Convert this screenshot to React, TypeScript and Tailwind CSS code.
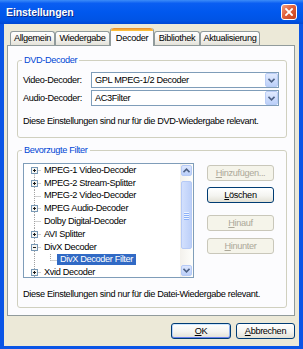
import React from "react";

type Kind = "plus" | "minus" | "leaf";

const treeItems: { label: string; kind: Kind; level: number; selected?: boolean }[] = [
  { label: "MPEG-1 Video-Decoder", kind: "plus", level: 0 },
  { label: "MPEG-2 Stream-Splitter", kind: "plus", level: 0 },
  { label: "MPEG-2 Video-Decoder", kind: "leaf", level: 0 },
  { label: "MPEG Audio-Decoder", kind: "plus", level: 0 },
  { label: "Dolby Digital-Decoder", kind: "leaf", level: 0 },
  { label: "AVI Splitter", kind: "plus", level: 0 },
  { label: "DivX Decoder", kind: "minus", level: 0 },
  { label: "DivX Decoder Filter", kind: "leaf", level: 1, selected: true },
  { label: "Xvid Decoder", kind: "plus", level: 0 },
];

const tabs = [
  { label: "Allgemein", w: "w-[45px]" },
  { label: "Wiedergabe", w: "w-[55px]" },
  { label: "Decoder", w: "w-[44px]", active: true },
  { label: "Bibliothek", w: "w-[46px]" },
  { label: "Aktualisierung", w: "w-[60px]" },
];

function Chevron({ up = false }: { up?: boolean }) {
  return (
    <svg width="7" height="5" viewBox="0 0 7 5">
      <polyline
        points={up ? "0.5,4.2 3.5,1.2 6.5,4.2" : "0.5,0.8 3.5,3.8 6.5,0.8"}
        fill="none"
        stroke="#4D6185"
        strokeWidth="1.6"
      />
    </svg>
  );
}

function Combo({ value }: { value: string }) {
  return (
    <div className="flex h-[16px] flex-1 border border-[#7F9DB9] bg-white">
      <span className="flex flex-1 items-center pl-[3px]">{value}</span>
      <div className="flex w-[13px] items-center justify-center rounded-[2px] border border-[#BACDF6] bg-[linear-gradient(to_bottom,#E1EAFE,#BCD0F9)]">
        <Chevron />
      </div>
    </div>
  );
}

function Button({
  children,
  disabled,
  isDefault,
  className = "",
}: {
  children: React.ReactNode;
  disabled?: boolean;
  isDefault?: boolean;
  className?: string;
}) {
  const look = disabled
    ? "border-[#C9C7BA] bg-[#F5F4EA] text-[#ACA899]"
    : "border-[#003C74] bg-[linear-gradient(to_bottom,#FFFFFF,#F4F4F0_55%,#E2E0D5)]";
  const ring = isDefault
    ? "shadow-[inset_0_1px_0_#CEE7FF,inset_0_-1px_0_#6982EE,inset_1px_0_0_#B9D1FA,inset_-1px_0_0_#8DAEEB]"
    : "";
  return (
    <div className={`flex h-[16px] items-center justify-center rounded-[3px] border leading-[11px] ${look} ${ring} ${className}`}>
      {children}
    </div>
  );
}

function Connector({ kind, level, first }: { kind: Kind; level: number; first: boolean }) {
  const dot = { stroke: "#A0A0A0", strokeDasharray: "1 1" };
  if (level === 1) {
    return (
      <svg width="33" height="12.8" viewBox="0 0 33 12.8" className="h-[12.8px] w-[33px] shrink-0">
        <line x1="10.5" y1="0" x2="10.5" y2="12.8" {...dot} />
        <line x1="26.5" y1="0" x2="26.5" y2="6.5" {...dot} />
        <line x1="26.5" y1="6.5" x2="33" y2="6.5" {...dot} />
      </svg>
    );
  }
  return (
    <svg width="17" height="12.8" viewBox="0 0 17 12.8" className="h-[12.8px] w-[17px] shrink-0">
      <line x1="10.5" y1={first ? 6.5 : 0} x2="10.5" y2="12.8" {...dot} />
      <line x1="10.5" y1="6.5" x2="17" y2="6.5" {...dot} />
      {kind !== "leaf" && (
        <>
          <rect x="7.5" y="3.5" width="6" height="6" fill="#F6F6F2" stroke="#7898B5" />
          <line x1="9" y1="6.5" x2="12" y2="6.5" stroke="#1A1A1A" />
          {kind === "plus" && <line x1="10.5" y1="5" x2="10.5" y2="8" stroke="#1A1A1A" />}
        </>
      )}
    </svg>
  );
}

function ScrollButton({ up }: { up?: boolean }) {
  return (
    <div className="h-[13px] p-[1px]">
      <div className="flex h-full items-center justify-center rounded-[2px] border border-[#B6CAF6] bg-[linear-gradient(to_bottom,#DDE7FE,#BBCFF9)]">
        <Chevron up={up} />
      </div>
    </div>
  );
}

export default function App() {
  return (
    <div className="flex h-[349px] w-[303px] flex-col bg-[#0A55E6] font-['Liberation_Sans',Arial,sans-serif] text-[9.2px] leading-[11px] tracking-[-0.35px] text-black">
      {/* Title bar */}
      <div className="flex h-[24px] shrink-0 items-center justify-between bg-[linear-gradient(to_bottom,#3C8CF8_0%,#0A5EF2_14%,#0058EE_50%,#0053E4_86%,#0047D4_100%)] pl-[6px] pr-[6px]">
        <span className="text-[10.5px] font-bold tracking-[-0.1px] text-white [text-shadow:1px_1px_0_#0A2A8C]">
          Einstellungen
        </span>
        <div className="flex h-[16px] w-[16px] items-center justify-center rounded-[3px] border border-white bg-[linear-gradient(135deg,#F2A184,#E1603A_45%,#C4411D)]">
          <svg width="8" height="8" viewBox="0 0 8 8">
            <path d="M1 1 L7 7 M7 1 L1 7" stroke="white" strokeWidth="1.8" strokeLinecap="square" />
          </svg>
        </div>
      </div>

      {/* Body */}
      <div className="mx-[4px] mb-[3px] flex flex-1 flex-col bg-[#ECE9D8] pl-[3px] pr-[4px] pt-[4px]">
        {/* Tabs */}
        <div className="relative z-10 -mb-[1px] flex h-[18px] items-end pl-[3px]">
          {tabs.map((t) =>
            t.active ? (
              <div
                key={t.label}
                className={`flex h-[18px] flex-col rounded-t-[3px] border-x border-[#919B9C] bg-[#FCFCFE] ${t.w}`}
              >
                <div className="h-[3px] rounded-t-[3px] bg-[linear-gradient(to_bottom,#E68B2C,#FFC73C)]" />
                <div className="flex flex-1 items-center justify-center pb-[1px]">{t.label}</div>
              </div>
            ) : (
              <div
                key={t.label}
                className={`mb-[1px] flex h-[14px] items-center justify-center rounded-t-[3px] border border-b-0 border-[#919B9C] bg-[linear-gradient(to_bottom,#FFFFFF,#F4F3EF_55%,#E4E2D9)] ${t.w}`}
              >
                {t.label}
              </div>
            )
          )}
        </div>

        {/* Tab page */}
        <div className="flex h-[271px] flex-col border border-[#919B9C] bg-[#FCFCFE] pl-[9px] pr-[7px] pt-[9px]">
          <fieldset className="rounded-[3px] border border-[#D0D0BF] pb-[10px] pl-[5px] pr-[7px] pt-[6px]">
            <legend className="-ml-[1px] px-[2px] text-[#0046D5]">DVD-Decoder</legend>
            <div className="flex items-center">
              <span className="w-[68px]">Video-Decoder:</span>
              <Combo value="GPL MPEG-1/2 Decoder" />
            </div>
            <div className="mt-[2px] flex items-center">
              <span className="w-[68px]">Audio-Decoder:</span>
              <Combo value="AC3Filter" />
            </div>
            <p className="mt-[10px]">Diese Einstellungen sind nur für die DVD-Wiedergabe relevant.</p>
          </fieldset>

          <fieldset className="mt-[7px] rounded-[3px] border border-[#D0D0BF] pb-[7px] pl-[5px] pr-[7px] pt-[7px]">
            <legend className="-ml-[1px] px-[2px] text-[#0046D5]">Bevorzugte Filter</legend>
            <div className="flex">
              {/* Tree */}
              <div className="flex h-[115px] w-[171px] border border-[#7F9DB9] bg-white">
                <div className="flex-1 overflow-hidden">
                  {treeItems.map((item, i) => (
                    <div key={item.label} className="flex h-[12.8px] items-center whitespace-nowrap">
                      <Connector kind={item.kind} level={item.level} first={i === 0} />
                      <span
                        className={`h-[11px] px-[3px] ${item.selected ? "bg-[#316AC5] text-white" : ""}`}
                      >
                        {item.label}
                      </span>
                    </div>
                  ))}
                </div>
                <div className="flex w-[13px] flex-col bg-[linear-gradient(to_right,#F3F1EC,#FEFEFB)]">
                  <ScrollButton up />
                  <div className="mx-[1px] mt-[4px] flex h-[68px] items-center justify-center rounded-[2px] border border-[#B6CAF6] bg-[linear-gradient(to_right,#D3E0FD,#BDD0F9)]">
                    <div className="flex flex-col gap-[1px]">
                      {[0, 1, 2, 3].map((g) => (
                        <div key={g} className="h-[1px] w-[5px] bg-[#EEF4FE] shadow-[0_1px_0_#8CB0F8]" />
                      ))}
                    </div>
                  </div>
                  <div className="flex-1" />
                  <ScrollButton />
                </div>
              </div>

              {/* Buttons */}
              <div className="ml-[13px] flex w-[67px] flex-col pt-[2px]">
                <Button disabled>
                  <span>
                    <span className="underline">H</span>inzufügen...
                  </span>
                </Button>
                <Button className="mt-[6px]">
                  <span>
                    <span className="underline">L</span>öschen
                  </span>
                </Button>
                <Button disabled className="mt-[12px]">
                  <span>
                    <span className="underline">H</span>inauf
                  </span>
                </Button>
                <Button disabled className="mt-[7px]">
                  <span>
                    <span className="underline">H</span>inunter
                  </span>
                </Button>
              </div>
            </div>
            <p className="mt-[11px]">Diese Einstellungen sind nur für die Datei-Wiedergabe relevant.</p>
          </fieldset>
        </div>

        {/* Dialog buttons */}
        <div className="mt-[7px] flex justify-end gap-[5px]">
          <Button isDefault className="w-[60px]">
            <span>
              <span className="underline">O</span>K
            </span>
          </Button>
          <Button className="w-[59px]">
            <span>
              <span className="underline">A</span>bbrechen
            </span>
          </Button>
        </div>
      </div>
    </div>
  );
}
